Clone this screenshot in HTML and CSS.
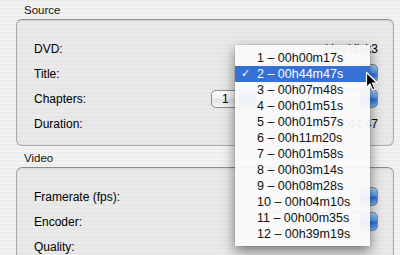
FILE: index.html
```html
<!DOCTYPE html>
<html>
<head>
<meta charset="utf-8">
<link rel="stylesheet" href="styles.css">
</head>
<body>
<div class="window">
  <section class="group">
    <div class="group-title">Source</div>
    <div class="box">
      <div class="row">
        <span class="label">DVD:</span>
        <span class="value">/dev/disk3</span>
      </div>
      <div class="row">
        <span class="label">Title:</span>
        <span class="popup wide"></span>
      </div>
      <div class="row">
        <span class="label">Chapters:</span>
        <span class="popup small"><span class="popup-text">1</span></span>
        <span class="popup end"></span>
      </div>
      <div class="row">
        <span class="label">Duration:</span>
        <span class="value">00:44:47</span>
      </div>
    </div>
  </section>
  <section class="group">
    <div class="group-title">Video</div>
    <div class="box">
      <div class="row">
        <span class="label">Framerate (fps):</span>
        <span class="popup wide"></span>
      </div>
      <div class="row">
        <span class="label">Encoder:</span>
        <span class="popup wide"></span>
      </div>
      <div class="row">
        <span class="label">Quality:</span>
      </div>
    </div>
  </section>
</div>

<ul class="menu">
  <li class="item">1 – 00h00m17s</li>
  <li class="item selected"><span class="check">✓</span>2 – 00h44m47s</li>
  <li class="item">3 – 00h07m48s</li>
  <li class="item">4 – 00h01m51s</li>
  <li class="item">5 – 00h01m57s</li>
  <li class="item">6 – 00h11m20s</li>
  <li class="item">7 – 00h01m58s</li>
  <li class="item">8 – 00h03m14s</li>
  <li class="item">9 – 00h08m28s</li>
  <li class="item">10 – 00h04m10s</li>
  <li class="item">11 – 00h00m35s</li>
  <li class="item">12 – 00h39m19s</li>
</ul>

<svg class="cursor" width="14" height="21" viewBox="0 0 14 21">
  <path d="M1.5 1.5 L1.5 16.5 L5 13 L7.6 19 L10 18 L7.5 12 L12.3 12 Z" fill="#000" stroke="#fff" stroke-width="1.2" stroke-linejoin="round"/>
</svg>
</body>
</html>
```
FILE: styles.css
```css
html, body {
  margin: 0;
  padding: 0;
}
body {
  width: 400px;
  height: 255px;
  overflow: hidden;
  position: relative;
  font-family: "Liberation Sans", Arial, sans-serif;
  font-size: 12px;
  color: #000;
  background: repeating-linear-gradient(to bottom, #ededed 0, #ededed 2px, #f3f3f3 2px, #f3f3f3 4px);
}
.window {
  display: flex;
  flex-direction: column;
  padding: 3px 6px 0 16px;
}
.group {
  display: flex;
  flex-direction: column;
}
.group + .group {
  margin-top: 5px;
}
.group-title {
  font-size: 11.5px;
  line-height: 14px;
  height: 14px;
  padding-left: 8px;
  margin-bottom: 2px;
  color: #111;
}
.box {
  border: 1px solid #a9a9a9;
  border-top-color: #8c8c8c;
  border-radius: 6px;
  background: repeating-linear-gradient(to bottom, #e6e6e6 0, #e6e6e6 2px, #eaeaea 2px, #eaeaea 4px);
  padding: 16px 15px 9px 17px;
  display: flex;
  flex-direction: column;
  box-shadow: inset 0 1px 2px rgba(0,0,0,0.08);
}
.group:last-child .box {
  padding-bottom: 10px;
}
.row {
  height: 25px;
  display: flex;
  align-items: center;
}
.label {
  width: 177px;
  flex: none;
}
.value {
  margin-left: auto;
}
.popup {
  position: relative;
  height: 17px;
  border: 1px solid #8a8a8a;
  border-radius: 5px;
  background: linear-gradient(to bottom, #ffffff, #f0f0f0 50%, #e2e2e2 51%, #f4f4f4);
  display: flex;
  align-items: center;
  overflow: hidden;
  box-sizing: border-box;
}
.popup::after {
  content: "";
  position: absolute;
  top: -1px;
  bottom: -1px;
  right: -1px;
  width: 18px;
  border-radius: 0 5px 5px 0;
  border: 1px solid #2b52a6;
  box-sizing: border-box;
  background: linear-gradient(to bottom, #a9cdf5, #5b9aea 45%, #2f6fd8 55%, #7fb6f4);
}
.popup-text {
  padding-left: 10px;
  font-size: 12px;
}
.popup.wide {
  margin-left: auto;
  width: 120px;
  height: 19px;
}
.popup.small {
  width: 46px;
  height: 18px;
}
.popup.end {
  margin-left: auto;
  width: 70px;
  height: 19px;
}
.menu {
  position: absolute;
  left: 235px;
  top: 45px;
  width: 135px;
  margin: 0;
  padding: 5px 0 4px;
  list-style: none;
  background: rgba(250, 250, 250, 0.94);
  box-shadow: 0 5px 12px rgba(0, 0, 0, 0.5), 0 0 1px rgba(0,0,0,0.3);
}
.item {
  position: relative;
  height: 16px;
  line-height: 16px;
  padding-left: 22px;
  font-size: 12.5px;
  color: #111;
  white-space: nowrap;
}
.item.selected {
  background: #3470d6;
  color: #fff;
}
.check {
  position: absolute;
  left: 6px;
  top: 0;
  font-family: "DejaVu Sans", sans-serif;
  font-size: 11px;
  font-weight: bold;
}
.cursor {
  position: absolute;
  left: 365px;
  top: 71px;
}
```
